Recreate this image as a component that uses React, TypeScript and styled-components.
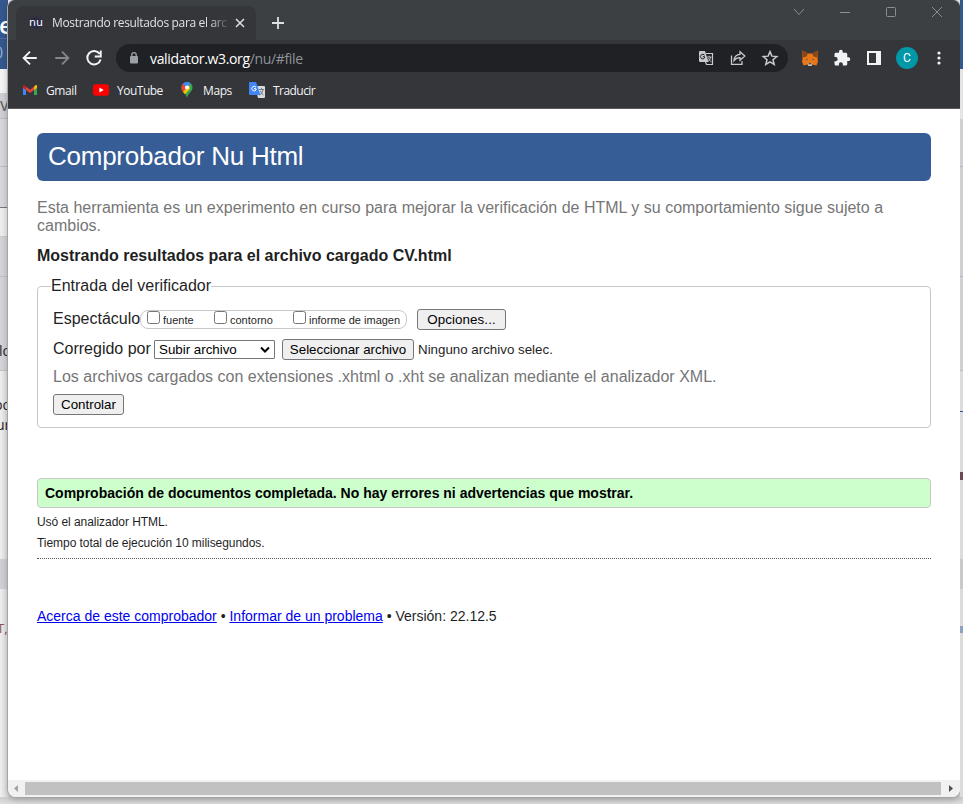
import React from "react";
import styled, { createGlobalStyle } from "styled-components";

const Global = createGlobalStyle`
  * { box-sizing: border-box; }
  body { margin: 0; overflow: hidden; font-family: "Liberation Sans", Arial, sans-serif; color: #1f1f1f; }
  h1, h2, p { margin: 0; }
`;

/* ---------- desktop behind the window ---------- */
const Desktop = styled.div`
  display: grid;
  grid-template-columns: 8px 952px 3px;
  width: 963px;
  height: 804px;
  overflow: hidden;
  background: linear-gradient(#e9e9ea 0 790px, #cfcfcf 798px, #dedede 804px);
`;
const Strip = styled.div<{ $right?: boolean }>`
  display: flex;
  flex-direction: column;
  overflow: hidden;
  height: 797px;
  background: ${(p) => (p.$right ? "#dcdcdd" : "linear-gradient(90deg, #efefef, #dedede)")};
`;
const Band = styled.div<{ $h: number; $bg?: string; $line?: string }>`
  height: ${(p) => p.$h}px;
  flex: none;
  overflow: hidden;
  background: ${(p) => p.$bg || "transparent"};
  border-bottom: ${(p) => (p.$line ? `1px solid ${p.$line}` : "0")};
`;
const Scrap = styled.span<{ $size: number; $top: number; $color?: string; $shift?: number; $bold?: boolean }>`
  display: block;
  white-space: nowrap;
  font: ${(p) => (p.$bold ? 600 : 400)} ${(p) => p.$size}px/${(p) => p.$size}px "Open Sans", sans-serif;
  color: ${(p) => p.$color || "#25252b"};
  margin-left: ${(p) => p.$shift || 0}px;
  padding-top: ${(p) => p.$top}px;
`;

/* ---------- window frame ---------- */
const Frame = styled.div`
  display: flex;
  flex-direction: column;
  height: 797px;
  border-radius: 8px;
  overflow: hidden;
  background: #fff;
  box-shadow: 0 0 0 1px #a6a6a8, 0 2px 7px rgba(0, 0, 0, 0.3);
`;
const Chrome = styled.div`
  height: 109px;
  flex: none;
  background: #35363a;
  border-bottom: 1px solid #5f5659;
  font-family: "Open Sans", "Noto Sans", sans-serif;
`;
const TabStrip = styled.div`
  height: 40px;
  display: flex;
  background: #3c4043;
`;
const Tab = styled.div`
  width: 240px;
  height: 34px;
  margin: 6px 0 0 8px;
  padding: 0 8px 0 12px;
  display: flex;
  align-items: center;
  border-radius: 8px 8px 0 0;
  background: #35363a;
  color: #dfe1e5;
`;
const Favicon = styled.span`
  width: 16px;
  text-align: center;
  margin-right: 8px;
  color: #fff;
  font: 11px/16px "DejaVu Sans", sans-serif;
  background: radial-gradient(circle, #20204f, transparent 75%);
`;
const TabTitle = styled.span`
  flex: 1;
  overflow: hidden;
  white-space: nowrap;
  font-size: 12px;
  letter-spacing: -0.34px;
  margin-top: -1px;
  mask-image: linear-gradient(90deg, #000 90%, transparent 102%);
`;
const TabClose = styled.svg`
  margin-left: 5px;
  flex: none;
`;
const NewTab = styled.svg`
  margin: 15px 0 0 14px;
`;
const WindowButtons = styled.div`
  margin-left: auto;
  margin-right: 16px;
  height: 24px;
  display: flex;
  align-items: center;
  gap: 32px;
`;
const Toolbar = styled.div`
  height: 36px;
  display: flex;
  align-items: center;
  padding: 0 12px 0 13px;
`;
const NavIcons = styled.div`
  display: flex;
  gap: 14px;
  width: 95px;
  flex: none;
`;
const Omnibox = styled.div`
  width: 672px;
  flex: none;
  height: 28px;
  border-radius: 14px;
  background: #202124;
  display: flex;
  align-items: center;
  padding: 0 9px 0 12px;
  color: #9aa0a6;
`;
const Url = styled.span`
  margin-left: 10px;
  flex: 1;
  font-size: 14px;
  letter-spacing: -0.35px;
  color: #8f949a;
  b { font-weight: 400; color: #fff; }
`;
const OmniActions = styled.div`
  display: flex;
  gap: 14px;
`;
const Extensions = styled.div`
  display: flex;
  align-items: center;
  margin-left: 13px;
  gap: 14px;
`;
const Avatar = styled.span`
  width: 22px;
  height: 22px;
  border-radius: 50%;
  background: #0097a7;
  color: #fff;
  font: 12px/22px Roboto, sans-serif;
  text-align: center;
  margin: 0 -2px 0 -1px;
`;
const Bookmarks = styled.div`
  height: 28px;
  display: flex;
  align-items: center;
  padding-left: 14px;
`;
const Bookmark = styled.div<{ $w: number; $ls: number }>`
  width: ${(p) => p.$w}px;
  display: flex;
  align-items: center;
  gap: 8px;
  color: #f1f3f4;
  font-size: 12px;
  white-space: nowrap;
  letter-spacing: ${(p) => p.$ls}px;
  svg { flex: none; }
`;

/* ---------- page ---------- */
const Page = styled.main`
  flex: 1;
  padding: 24px 29px 0;
  overflow: hidden;
`;
const Title = styled.h1`
  height: 48px;
  border-radius: 6px;
  background: #365d95;
  color: #fff;
  font-size: 26px;
  font-weight: 400;
  line-height: 46px;
  letter-spacing: -0.25px;
  padding-left: 11px;
`;
const Intro = styled.p`
  margin-top: 18px;
  font-size: 16px;
  line-height: 18px;
  color: #767676;
`;
const Results = styled.h2`
  margin-top: 11px;
  font-size: 16px;
  line-height: 20px;
`;
const Fieldset = styled.fieldset`
  margin: 11px 0 0;
  padding: 0 15px;
  height: 151px;
  border: 1px solid #c8c8c8;
  border-radius: 4px;
  min-width: 0;
`;
const Legend = styled.legend`
  margin-left: -2px;
  padding: 0;
  font-size: 16px;
  line-height: 18px;
`;
const Row = styled.div<{ $h: number; $top?: number; $muted?: boolean }>`
  height: ${(p) => p.$h}px;
  margin-top: ${(p) => p.$top || 0}px;
  display: flex;
  align-items: center;
  white-space: nowrap;
  color: ${(p) => (p.$muted ? "#767676" : "inherit")};
`;
const Label = styled.span<{ $w: number }>`
  width: ${(p) => p.$w}px;
  flex: none;
  line-height: 20px;
  margin-top: -2px;
`;
const Checks = styled.div`
  width: 267px;
  height: 19px;
  display: flex;
  border: 1px solid #c8c8c8;
  border-radius: 8px;
  padding-left: 6px;
  font-size: 11px;
`;
const Check = styled.label<{ $w: number }>`
  display: flex;
  width: ${(p) => p.$w}px;
  line-height: 19px;
  gap: 3px;
  input { width: 13px; height: 13px; margin: 0; flex: none; }
`;
const Button = styled.button<{ $w: number; $left?: number; $ls?: number }>`
  width: ${(p) => p.$w}px;
  height: 21px;
  margin: 0 0 0 ${(p) => p.$left || 0}px;
  padding: 0;
  border: 1px solid #767676;
  border-radius: 3px;
  background: #efefef;
  color: #000;
  font: 13.333px/19px "Liberation Sans", Arial, sans-serif;
  letter-spacing: ${(p) => p.$ls || 0}px;
`;
const Select = styled.div`
  width: 121px;
  height: 19px;
  display: flex;
  justify-content: space-between;
  align-items: center;
  padding: 0 4px;
  border: 1px solid #767676;
  border-radius: 1px;
  font-size: 13.333px;
  color: #000;
`;
const FileName = styled.span`
  margin-left: 4px;
  font-size: 13.333px;
`;
const Success = styled.p`
  height: 30px;
  margin: 50px 0 4px;
  padding-left: 7px;
  border: 1px solid #c8c8c8;
  border-radius: 4px;
  background: #ccffcc;
  color: #000;
  font-size: 14px;
  line-height: 28px;
  font-weight: 700;
`;
const Details = styled.div`
  height: 47px;
  border-bottom: 1px dotted #555;
  font-size: 12px;
  line-height: 21px;
  letter-spacing: -0.05px;
`;
const Footer = styled.footer`
  margin-top: 47px;
  font-size: 14px;
  line-height: 20px;
  a { color: #0000ee; }
`;
const ScrollBar = styled.div`
  height: 17px;
  flex: none;
  display: grid;
  grid-template-columns: 17px 1fr 19px;
  align-items: center;
  justify-items: center;
  background: #f1f1f1;
`;
const Thumb = styled.div`
  width: 100%;
  height: 13px;
  background: #c1c1c1;
`;

const Icon = ({ d, s = 18, color = "#c7c9cc", fill = false, w = 2 }: { d: string; s?: number; color?: string; fill?: boolean; w?: number }) => (
  <svg width={s} height={s} viewBox="0 0 24 24" fill={fill ? color : "none"} stroke={fill ? "none" : color} strokeWidth={w}>
    <path d={d} />
  </svg>
);

const Gmail = () => (
  <svg width="16" height="16" viewBox="0 0 16 16">
    <path d="M1 4v9h3V6z" fill="#4285f4" /><path d="M12 6v7h3V4z" fill="#34a853" />
    <path d="M1 3.5v2.2L4 8V4.7L2.7 3.3Q1.3 2.6 1 3.5z" fill="#c5221f" />
    <path d="M15 3.5v2.2L12 8V4.7l1.3-1.4q1.4-.7 1.7.2z" fill="#fbbc04" />
    <path d="M4 4.7l4 3 4-3V8l-4 3-4-3z" fill="#ea4335" />
  </svg>
);
const YouTube = () => (
  <svg width="16" height="16" viewBox="0 0 16 16">
    <rect y="2.3" width="16" height="11.5" rx="2.8" fill="#f00" /><path d="M6.4 5.6v5l4.3-2.5z" fill="#fff" />
  </svg>
);
const Maps = () => (
  <svg width="16" height="16" viewBox="0 0 16 16">
    <path d="M2.5 5.5a5.5 5.5 0 0 1 11 0C13.5 9.5 9 11 8 16 7 11 2.5 9.5 2.5 5.5z" fill="#34a853" />
    <path d="M3.7 2L8 5.5 11.8 1.5A5.5 5.5 0 0 0 3.7 2z" fill="#4285f4" />
    <path d="M3.7 2L8 5.5 4 10C1.7 7 2 4 3.7 2z" fill="#ea4335" />
    <path d="M4 10l6-7 1 3.7L6 12.3z" fill="#fbbc04" />
    <circle cx="8" cy="5.5" r="2" fill="#fff" />
  </svg>
);
const Translate = () => (
  <svg width="16" height="16" viewBox="0 0 16 16">
    <path d="M6 4h9q1 0 1 1v10q0 1-1 1H9z" fill="#d8dadd" />
    <path d="M1 0h6l4.500 13H1q-1 0-1-1V1q0-1 1-1z" fill="#4285f4" />
    <path d="M7 5.2A2.3 2.3 0 1 0 7 8V6.7H5" fill="none" stroke="#fff" />
    <path d="M10 7.5h5M12.5 6v1.5M14 8q-1 4-3.5 5M11.5 9q1 3 3 4" fill="none" stroke="#65727c" strokeWidth=".9" />
  </svg>
);
const TranslatePage = () => (
  <svg width="18" height="18" viewBox="0 0 18 18">
    <path d="M3 2h5l3.5 11H3q-1 0-1-1V3q0-1 1-1z" fill="#c7c9cc" />
    <path d="M9 4.5h6.5v11H9.5L8.5 13" fill="none" stroke="#c7c9cc" strokeWidth="1.2" />
    <path d="M7.6 6.2A2.3 2.3 0 1 0 7.6 9V7.7H5.8" fill="none" stroke="#202124" strokeWidth="1" />
    <path d="M10 8h4.5M12.2 6.8V8M13.8 8q-.8 3.5-3 4.5M11.500 9q.8 2.8 3 4" fill="none" stroke="#c7c9cc" strokeWidth=".9" />
  </svg>
);
const Share = () => (
  <svg width="18" height="18" viewBox="0 0 18 18" fill="none" stroke="#c7c9cc" strokeWidth="1.3">
    <path d="M2.500 6.500v8.800h10.500v-3" />
    <path d="M5 11.500C5.300 7.500 7.500 5.500 11 5.300V2.800L15.800 7 11 11.200V8.700C8.300 8.700 6.500 9.500 5 11.500z" />
  </svg>
);
const Fox = () => (
  <svg width="18" height="18" viewBox="0 0 18 18">
    <path d="M1 1.500l6 3h4l6-3-.5 8 .5 3-1.500 4-4-1-1 1.500h-3l-1-1.500-4 1L1 12.500l.6-3z" fill="#e8761b" />
    <path d="M1 1.500l6 3-1.500 3-4 1zM17 1.500l-6 3 1.500 3 4 1z" fill="#8a4519" />
    <path d="M6.500 14h5l-1 3h-3z" fill="#d6c0b0" /><path d="M7.500 14.200h3v1h-3z" fill="#2b2b2b" />
    <path d="M5.200 9.800l1.900.8-1.500.5zM12.800 9.800l-1.900.8 1.500.5z" fill="#293642" />
  </svg>
);

export default function App() {
  return (
    <>
      <Global />
      <Desktop>
        <Strip>
          <Band $h={39} $bg="#34588e" $line="#4b6f9f"><Scrap $size={24} $top={13} $color="#fff" $shift={-1} $bold>e</Scrap></Band>
          <Band $h={30} $bg="#34588e"><Scrap $size={13} $top={6} $color="#a9bcd6" $shift={-1}>)</Scrap></Band>
          <Band $h={24} $bg="#f4f4f4" />
          <Band $h={26} $bg="#cfd0d5" $line="#b9bdcb"><Scrap $size={14} $top={6} $color="#666" $bold>V</Scrap></Band>
          <Band $h={48} $bg="#d7d8dc" $line="#b9bdcb" />
          <Band $h={41} $bg="#d7d8dc" $line="#77777c" />
          <Band $h={29} $bg="#ededed" $line="#cccccf" />
          <Band $h={40} $bg="#d3d4d8" $line="#bfc3cf" />
          <Band $h={94} $bg="#d3d4d8" $line="#c0c0c3"><Scrap $size={14} $top={67} $shift={-1}>lo</Scrap></Band>
          <Band $h={188}>
            <Scrap $size={14} $top={27} $shift={-6}>po</Scrap>
            <Scrap $size={14} $top={6} $shift={-4}>ur</Scrap>
          </Band>
          <Band $h={30} $bg="#cfd0d4" />
          <Band $h={208}><Scrap $size={13} $top={33} $color="#8c5644" $shift={-3}>T,</Scrap></Band>
        </Strip>

        <Frame>
          <Chrome>
            <TabStrip>
              <Tab>
                <Favicon>nu</Favicon>
                <TabTitle>Mostrando resultados para el archivo</TabTitle>
                <TabClose width="16" height="16" stroke="#dfe1e5" strokeWidth="1.5"><path d="M4 4l8 8M12 4l-8 8" /></TabClose>
              </Tab>
              <NewTab width="16" height="16" stroke="#dfe1e5" strokeWidth="1.8"><path d="M8 2v12M2 8h12" /></NewTab>
              <WindowButtons>
                <svg width="14" height="14" fill="none" stroke="#8b8e90"><path d="M2 4l5 5.500L12 4" /></svg>
                <svg width="14" height="14" stroke="#8b8e90"><path d="M2 7.500h10" /></svg>
                <svg width="14" height="14" fill="none" stroke="#8b8e90"><rect x="2.5" y="2.5" width="9" height="9" rx="1" /></svg>
                <svg width="14" height="14" stroke="#8b8e90"><path d="M2 2l10 10M12 2L2 12" /></svg>
              </WindowButtons>
            </TabStrip>
            <Toolbar>
              <NavIcons>
                <Icon d="M21 12H4M12 3.5L3.5 12l8.5 8.5" color="#f1f3f4" w={2.5} />
                <Icon d="M3 12h17M12 3.5l8.500 8.500-8.500 8.500" color="#85878a" w={2.5} />
                <Icon d="M19.500 6.500A9 9 0 1 0 20.800 14M21 2v8h-8" color="#f1f3f4" w={2.6} />
              </NavIcons>
              <Omnibox>
                <svg width="12" height="14" viewBox="0 0 12 14">
                  <rect x="2" y="5" width="8" height="7.500" rx="1" fill="#9aa0a6" /><path d="M3.8 5.500V3.800a2.200 2.200 0 0 1 4.400 0v1.700" fill="none" stroke="#9aa0a6" strokeWidth="1.3" />
                </svg>
                <Url><b>validator.w3.org</b>/nu/#file</Url>
                <OmniActions>
                  <TranslatePage />
                  <Share />
                  <Icon d="M12 3.500l2.500 6 6.500.500-5 4.200 1.600 6.300L12 17.100 6.400 20.500 8 14.200 3 10l6.500-.500z" w={2} />
                </OmniActions>
              </Omnibox>
              <Extensions>
                <Fox />
                <Icon fill color="#f1f3f4" d="M20.500 11H19V7c0-1.100-.9-2-2-2h-4V3.500a2.500 2.500 0 0 0-5 0V5H4c-1.100 0-2 .9-2 2v3.800h1.500a2.700 2.700 0 0 1 0 5.400H2V20c0 1.100.9 2 2 2h3.800v-1.500a2.700 2.700 0 0 1 5.400 0V22H17c1.100 0 2-.9 2-2v-4h1.500a2.500 2.500 0 0 0 0-5z" />
                <svg width="18" height="18"><path fillRule="evenodd" d="M2 2h14v14H2zM4 4v10h7V4z" fill="#f1f3f4" /></svg>
                <Avatar>C</Avatar>
                <svg width="18" height="18" fill="#f1f3f4"><circle cx="9" cy="4" r="1.6" /><circle cx="9" cy="9" r="1.600" /><circle cx="9" cy="14" r="1.600" /></svg>
              </Extensions>
            </Toolbar>
            <Bookmarks>
              <Bookmark $w={71} $ls={-0.4}><Gmail />Gmail</Bookmark>
              <Bookmark $w={86} $ls={-0.5}><YouTube />YouTube</Bookmark>
              <Bookmark $w={70} $ls={-0.4}><Maps />Maps</Bookmark>
              <Bookmark $w={80} $ls={-0.55}><Translate />Traducir</Bookmark>
            </Bookmarks>
          </Chrome>

          <Page>
            <Title>Comprobador Nu Html</Title>
            <Intro>Esta herramienta es un experimento en curso para mejorar la verificación de HTML y su comportamiento sigue sujeto a cambios.</Intro>
            <Results>Mostrando resultados para el archivo cargado CV.html</Results>
            <Fieldset>
              <Legend>Entrada del verificador</Legend>
              <Row $h={21} $top={14}>
                <Label $w={87}>Espectáculo</Label>
                <Checks>
                  <Check $w={67}><input type="checkbox" />fuente</Check>
                  <Check $w={79}><input type="checkbox" />contorno</Check>
                  <Check $w={112}><input type="checkbox" />informe de imagen</Check>
                </Checks>
                <Button $w={89} $left={10} $ls={0.1}>Opciones...</Button>
              </Row>
              <Row $h={21} $top={9}>
                <Label $w={101}>Corregido por</Label>
                <Select>
                  Subir archivo
                  <svg width="10" height="8" fill="none" stroke="#000" strokeWidth="2"><path d="M1 1.500l4 4 4-4" /></svg>
                </Select>
                <Button $w={132} $left={7}>Seleccionar archivo</Button>
                <FileName>Ninguno archivo selec.</FileName>
              </Row>
              <Row $h={18} $top={8} $muted>Los archivos cargados con extensiones .xhtml o .xht se analizan mediante el analizador XML.</Row>
              <Row $h={21} $top={8}><Button $w={71}>Controlar</Button></Row>
            </Fieldset>
            <Success>Comprobación de documentos completada. No hay errores ni advertencias que mostrar.</Success>
            <Details>
              <p>Usó el analizador HTML.</p>
              <p>Tiempo total de ejecución 10 milisegundos.</p>
            </Details>
            <Footer>
              <a href="#about">Acerca de este comprobador</a> • <a href="#issue">Informar de un problema</a> • Versión: 22.12.5
            </Footer>
          </Page>

          <ScrollBar>
            <svg width="17" height="17" fill="#a3a3a3"><path d="M10 5v7L6 8.500z" /></svg>
            <Thumb />
            <svg width="17" height="17" fill="#505050"><path d="M7 5v7l4-3.500z" /></svg>
          </ScrollBar>
        </Frame>

        <Strip $right>
          <Band $h={69} $bg="#34588e" />
          <Band $h={50} $bg="#e4e4e4" />
          <Band $h={48} $bg="#cfcfd4" $line="#b9b9c2" />
          <Band $h={110} $bg="#cfcfd4" $line="#b9b9c2" />
          <Band $h={94} $bg="#cfcfd4" $line="#bdbdc0" />
          <Band $h={41} $line="#34588e" />
          <Band $h={60} />
          <Band $h={8} $bg="#6b4a55" />
          <Band $h={79} />
          <Band $h={30} $bg="#c9c9cc" />
          <Band $h={37} />
          <Band $h={7} $bg="#8aa4bd" />
        </Strip>
      </Desktop>
    </>
  );
}
